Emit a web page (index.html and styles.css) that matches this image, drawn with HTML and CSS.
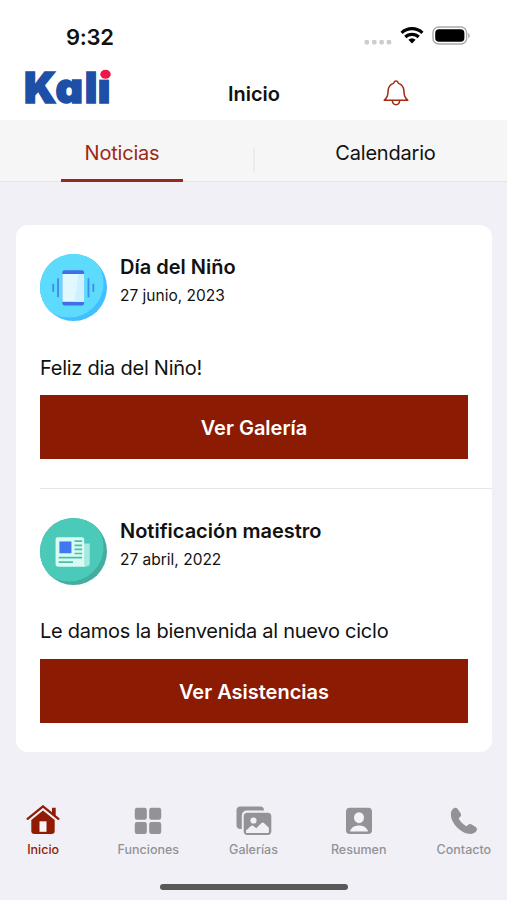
FILE: index.html
```html
<!DOCTYPE html>
<html lang="es">
<head>
  <meta charset="utf-8">
  <title>Kali - Inicio</title>
  <link rel="stylesheet" href="styles.css">
</head>
<body>
  <header class="header">
    <div class="status-bar">
      <span class="time">9:32</span>
      <div class="status-icons">
        <svg class="signal" width="28" height="6" viewBox="0 0 28 6" fill="#cdcdcd">
          <rect x="0.5" y="1" width="4.6" height="4.4" rx="1.4"/>
          <rect x="8" y="1" width="4.6" height="4.4" rx="1.4"/>
          <rect x="15.3" y="1" width="4.6" height="4.4" rx="1.4"/>
          <rect x="22.7" y="1" width="4.6" height="4.4" rx="1.4"/>
        </svg>
        <svg class="wifi" width="24" height="18" viewBox="0 0 24 18" fill="none" stroke="#000" stroke-width="3.2">
          <path d="M1.6 6.8a15 15 0 0 1 20.8 0"/>
          <path d="M5.3 11a9.6 9.6 0 0 1 13.4 0"/>
          <path d="M8.4 13.7a5 5 0 0 1 7.2 0L12 17.6z" fill="#000" stroke="none"/>
        </svg>
        <svg class="battery" width="39" height="20" viewBox="0 0 39 20">
          <rect x="1" y="1" width="33.6" height="17" rx="5.6" fill="none" stroke="#a9a9a9" stroke-width="1.4"/>
          <rect x="3.2" y="3.2" width="29.2" height="12.6" rx="3.8" fill="#000"/>
          <path d="M36.2 7v5.2c2-.8 2-4.4 0-5.2z" fill="#a9a9a9"/>
        </svg>
      </div>
    </div>
    <div class="nav-bar">
      <svg class="logo" width="96" height="54" viewBox="0 0 96 54">
        <text class="logo-text" x="0 31.6 60.8 73.8" y="36.5">Kali</text>
        <rect x="74" y="2" width="16" height="11.5" fill="#fff"/>
        <ellipse cx="81.5" cy="8.2" rx="5.2" ry="4.5" fill="#ee174b"/>
      </svg>
      <h1 class="title">Inicio</h1>
      <svg class="bell" width="26" height="26" viewBox="0 0 26 26" fill="none" stroke="#a02a12" stroke-width="1.5" stroke-linejoin="round">
        <path d="M1.2 20.3c3.4-3.1 3.6-5 4-10.2.3-3.4 2-5.5 4.7-6.5.5-.2.8-.5 1-1C11.3 1.5 12 1.1 13 1.1s1.7.4 2.1 1.5c.2.5.5.8 1 1 2.7 1 4.4 3.1 4.7 6.5.4 5.2.6 7.1 4 10.2z"/>
        <path d="M9.3 20.5c.3 2.7 1.8 4.2 3.7 4.2s3.4-1.5 3.7-4.2"/>
      </svg>
    </div>
  </header>

  <nav class="tabs">
    <div class="tab active"><span>Noticias</span></div>
    <div class="tab"><span>Calendario</span></div>
  </nav>

  <main class="content">
    <div class="card">
      <article class="news">
        <div class="news-header">
          <svg class="news-icon" viewBox="0 0 68 68">
            <clipPath id="disc"><circle cx="34" cy="34" r="34"/></clipPath>
            <g clip-path="url(#disc)">
              <rect width="68" height="68" fill="#42bfff"/>
              <circle cx="29.5" cy="29.5" r="35" fill="#5cdbfd"/>
            </g>
            <rect x="22.7" y="16.5" width="22" height="35.7" rx="2" fill="#3d70e8"/>
            <rect x="22.7" y="20.3" width="22" height="28.2" fill="#e1f8ff"/>
            <path d="M39 20.3h5.7v28.2H35z" fill="#cff1ff"/>
            <g stroke="#3f8eea" stroke-width="1.9">
              <path d="M13.4 30.3v8M18.3 24.5v19.5M49.2 24.5v19.5M54.1 30.3v8"/>
            </g>
          </svg>
          <div class="news-heading">
            <h2 class="news-title">Día del Niño</h2>
            <div class="news-date">27 junio, 2023</div>
          </div>
        </div>
        <p class="news-text">Feliz dia del Niño!</p>
        <button class="news-button">Ver Galería</button>
      </article>

      <article class="news">
        <div class="news-header">
          <svg class="news-icon" viewBox="0 0 68 68">
            <g clip-path="url(#disc)">
              <rect width="68" height="68" fill="#45ada0"/>
              <circle cx="29.5" cy="29.5" r="35" fill="#4bcab9"/>
            </g>
            <path d="M44 26h6.5v20.5a2.5 2.5 0 0 1-2.5 2.5h-4z" fill="#a5e9df"/>
            <path d="M17.8 19.5h25a2 2 0 0 1 2 2V47q.2 2.2 2 2.5H18.3a2.5 2.5 0 0 1-2.5-2.5V21.500a2 2 0 0 1 2-2z" fill="#d8fbf3"/>
            <rect x="19.7" y="23.8" width="12.2" height="12" fill="#3f78f2"/>
            <path d="M35 23.5h7.7M35 27.7h7.7M35 31.8h7.7M35 36h7.7M19 40.3h23.7M19 44.7h14.5" stroke="#4cbdad" stroke-width="1.7"/>
          </svg>
          <div class="news-heading">
            <h2 class="news-title">Notificación maestro</h2>
            <div class="news-date">27 abril, 2022</div>
          </div>
        </div>
        <p class="news-text">Le damos la bienvenida al nuevo ciclo</p>
        <button class="news-button">Ver Asistencias</button>
      </article>
    </div>
  </main>

  <footer class="tab-bar">
    <a class="tab-item active">
      <svg width="36" height="32" viewBox="0 0 36 32">
        <path d="M18 6.5 6.3 16v10.5A3.3 3.3 0 0 0 9.6 30h16.8a3.3 3.3 0 0 0 3.3-3.500V16z" fill="currentColor"/>
        <path d="M2.6 14.8 18 2.3l15.4 12.5" fill="none" stroke="#f1f0f6" stroke-width="4.5"/>
        <path d="M2.6 14.8 18 2.3l15.4 12.5" fill="none" stroke="currentColor" stroke-width="2.3" stroke-linecap="round" stroke-linejoin="round"/>
        <path d="M27 3.7h3.7v8.5L27 9z" fill="currentColor"/>
        <rect x="14.5" y="17.3" width="7" height="10.5" fill="#f8f6f7"/>
      </svg>
      <span>Inicio</span>
    </a>
    <a class="tab-item">
      <svg width="36" height="32" viewBox="0 0 36 32" fill="currentColor">
        <rect x="4.8" y="3.8" width="12" height="12" rx="2.2"/>
        <rect x="19.2" y="3.8" width="12" height="12" rx="2.2"/>
        <rect x="4.8" y="18" width="12" height="12" rx="2.2"/>
        <rect x="19.2" y="18" width="12" height="12" rx="2.2"/>
      </svg>
      <span>Funciones</span>
    </a>
    <a class="tab-item">
      <svg width="36" height="32" viewBox="0 0 36 32" fill="currentColor">
        <rect x=".5" y="2.4" width="27.5" height="22.5" rx="4"/>
        <rect x="5.8" y="6.5" width="31" height="27" rx="5" fill="#f1f0f6"/>
        <rect x="7.7" y="8.7" width="27.6" height="22.3" rx="3.7"/>
        <circle cx="17.5" cy="16.5" r="3.1" fill="#f1f0f6"/>
        <path d="M10 29v-2.5l5-4.6q1.2-1 2.4 0l2.8 2.3 5.3-5.3q1.2-1 2.4 0l5 4.8V28q0 1-1 1z" fill="#f1f0f6"/>
      </svg>
      <span>Galerías</span>
    </a>
    <a class="tab-item">
      <svg width="36" height="32" viewBox="0 0 36 32">
        <rect x="5" y="3.8" width="26" height="26.2" rx="3.8" fill="currentColor"/>
        <ellipse cx="18" cy="13.7" rx="5" ry="5.5" fill="#f4f3f8"/>
        <path d="M9 27.5c1-4 4.7-6 9-6s8 2 9 6z" fill="#f4f3f8"/>
      </svg>
      <span>Resumen</span>
    </a>
    <a class="tab-item">
      <svg width="36" height="32" viewBox="0 0 36 32" fill="currentColor">
        <path d="M5.3 7.5c.4-1.6 2.4-3.8 4.2-3.8 1.1 0 1.900.8 2.9 2.3l2.2 3.3c.9 1.5.7 2.4-.4 3.5l-1 1c-.5.5-.4.9-.1 1.4 1.500 2.5 4.2 5.2 6.7 6.7.5.3.9.3 1.4-.1l1-1c1.1-1 2.1-1.200 3.5-.3l3.6 2.3c1.500 1 2 2.1 1.6 3.3-.7 2-3.4 3.9-6 3.9-9.8 0-20.100-11-20-19.5 0-1.200.1-2.200.4-3z"/>
      </svg>
      <span>Contacto</span>
    </a>
  </footer>
  <div class="home-indicator"></div>
</body>
</html>
```
FILE: styles.css
```css
* {
  box-sizing: border-box;
}

body {
  display: flex;
  flex-direction: column;
  height: 900px;
  margin: 0;
  overflow: hidden;
  background: #f1f0f6;
  color: #111;
  font-family: Inter, "Liberation Sans", sans-serif;
}

h1, h2, p {
  margin: 0;
}

.header {
  height: 120px;
  background: #fff;
}

.status-bar {
  display: flex;
  justify-content: space-between;
  height: 66px;
  padding: 23px 36px 0 66px;
}

.time {
  font-size: 22px;
  font-weight: 600;
  line-height: 28px;
  letter-spacing: -0.3px;
}

.status-icons {
  display: flex;
  align-items: flex-start;
  padding-top: 3px;
}

.signal {
  margin: 13px 8px 0 0;
}

.wifi {
  margin-right: 8px;
}

.nav-bar {
  display: grid;
  grid-template-columns: 96px 268px 26px;
  align-items: center;
  height: 54px;
  padding-left: 24px;
}

.logo {
  overflow: visible;
}

.logo-text {
  font-size: 42.5px;
  font-weight: 900;
  font-feature-settings: "cv11";
  fill: #1c4fa5;
  stroke: #1c4fa5;
  stroke-width: 1.5px;
}

.title {
  padding-top: 1px;
  font-size: 20px;
  font-weight: 600;
  line-height: 28px;
  text-align: center;
}

.bell {
  margin-left: -5px;
}

.tabs {
  position: relative;
  display: grid;
  grid-template-columns: 264px 1fr;
  height: 62px;
  background: #f6f6f6;
  border-bottom: 1px solid #e6e6e8;
}

.tabs::after {
  content: "";
  position: absolute;
  left: 253px;
  top: 28px;
  width: 2px;
  height: 24px;
  background: #ececed;
}

.tab {
  display: flex;
  justify-content: center;
  padding-top: 19px;
  font-size: 20px;
  line-height: 28px;
  letter-spacing: -0.2px;
}

.tab.active {
  width: 122px;
  height: 62px;
  margin-left: 61px;
  border-bottom: 3px solid #96291e;
  color: #9b2a16;
}

.content {
  padding: 43px 15px 0 16px;
}

.card {
  height: 527px;
  padding-left: 24px;
  background: #fff;
  border-radius: 12px;
}

.news {
  height: 264px;
  padding: 29px 24px 0 0;
}

.news:first-child {
  border-bottom: 1px solid #e6e6e8;
}

.news-header {
  display: flex;
  height: 96px;
}

.news-icon {
  width: 67px;
  height: 67px;
  margin-right: 13px;
}

.news-heading {
  margin-top: -1px;
}

.news-title {
  font-size: 20px;
  font-weight: 600;
  line-height: 28px;
}

.news-date {
  padding-top: 1px;
  font-size: 15.5px;
  line-height: 27px;
}

.news-text {
  height: 45px;
  padding-top: 3px;
  font-size: 20px;
  line-height: 28px;
  letter-spacing: -0.25px;
}

.news:first-child .news-text {
  padding-top: 4px;
}

.news-button {
  display: block;
  width: 100%;
  height: 64px;
  padding: 2px 0 0;
  border: 0;
  background: #8c1b03;
  color: #fff;
  font-family: inherit;
  font-size: 20px;
  font-weight: 600;
}

.tab-bar {
  display: grid;
  grid-template-columns: repeat(5, 105.2px);
  justify-content: center;
  margin-top: 52px;
}

.tab-item {
  display: flex;
  flex-direction: column;
  align-items: center;
  color: #929297;
  font-size: 12.5px;
  font-weight: 500;
  line-height: 16px;
}

.tab-item svg {
  margin-bottom: 6px;
}

.tab-item.active {
  color: #921b06;
}

.home-indicator {
  width: 188px;
  height: 6px;
  margin: 26px auto 0;
  border-radius: 3px;
  background: #58585a;
}
```
